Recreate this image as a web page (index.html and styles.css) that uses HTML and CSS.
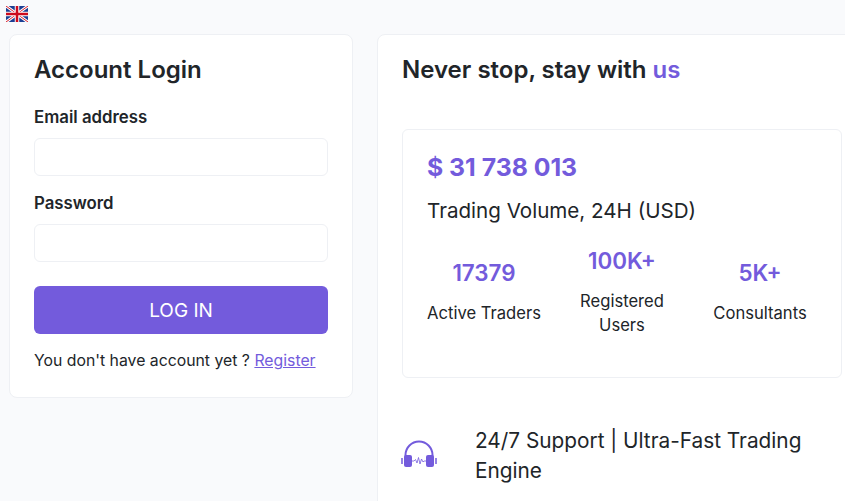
FILE: index.html
```html
<!DOCTYPE html>
<html>

<head>
  <title>Account Login</title>
  <link rel="stylesheet" href="styles.css">
</head>

<body>
  <div class="lang">
    <svg class="flag" viewBox="0 0 22 16" width="22" height="16">
      <rect width="22" height="16" fill="#1c3f94" />
      <path d="M0 0L22 16M22 0L0 16" stroke="#fff" stroke-width="3" />
      <path d="M0 0L22 16M22 0L0 16" stroke="#d8202c" stroke-width="1" />
      <path d="M11 0V16M0 8H22" stroke="#fff" stroke-width="4.500" />
      <path d="M11 0V16M0 8H22" stroke="#cc0a1e" stroke-width="2.500" />
    </svg>
  </div>
  <div class="page">
    <div class="card login">
      <h2>Account Login</h2>
      <label for="email">Email address</label>
      <input type="text" id="email">
      <label for="password">Password</label>
      <input type="password" id="password">
      <button>LOG IN</button>
      <p class="register">You don't have account yet ? <a href="#">Register</a></p>
    </div>
    <div class="card info">
      <h2>Never stop, stay with <span class="accent">us</span></h2>
      <div class="volume">
        <div class="amount">$ 31 738 013</div>
        <div class="amount-label">Trading Volume, 24H (USD)</div>
        <div class="stats">
          <div class="stat">
            <div class="stat-num">17379</div>
            <div class="stat-label">Active Traders</div>
          </div>
          <div class="stat">
            <div class="stat-num">100K+</div>
            <div class="stat-label">Registered Users</div>
          </div>
          <div class="stat">
            <div class="stat-num">5K+</div>
            <div class="stat-label">Consultants</div>
          </div>
        </div>
      </div>
      <div class="feature">
        <svg class="headset" viewBox="0 0 36 28" width="36" height="28">
          <path d="M4.500 17V15a13.500 13.500 0 0 1 27 0V17" fill="none" stroke="#735bdc" stroke-width="2" />
          <rect x="3" y="15" width="8" height="12" rx="2" fill="#735bdc" />
          <rect x="25" y="15" width="8" height="12" rx="2" fill="#735bdc" />
          <path d="M1 18V24M35 18V24" stroke="#735bdc" stroke-width="1.500" />
          <path d="M11 21H13L14.500 19.500L16 23L17.500 17.500L19 24L20.500 19L22 22L23 21H25" fill="none" stroke="#735bdc" stroke-width="0.800" />
        </svg>
        <div class="feature-text">24/7 Support | Ultra-Fast Trading Engine</div>
      </div>
    </div>
  </div>
</body>

</html>
```

FILE: styles.css
```css
html,
body {
  height: 100%;
  overflow: hidden;
}

body {
  margin: 0;
  background-color: #f9fafc;
  color: #212529;
  font-family: Inter, "Noto Sans", sans-serif;
  font-size: 16px;
}

.lang {
  height: 34px;
  padding: 6px 0 0 6px;
  box-sizing: border-box;
}

.flag {
  display: block;
}

.page {
  display: flex;
  gap: 24px;
  align-items: flex-start;
  margin-left: 9px;
  width: 860px;
}

.card {
  background-color: #fff;
  border: 1px solid #eef0f4;
  border-radius: 8px;
  box-sizing: border-box;
}

.login {
  flex: 0 0 344px;
  height: 364px;
  padding: 20px 24px 0;
}

.info {
  flex: 0 0 490px;
  height: 520px;
  padding: 20px 24px 0;
}

h2 {
  margin: 0;
  font-size: 24px;
  line-height: 30px;
  font-weight: 600;
}

.accent {
  color: #735bdc;
}

label {
  display: block;
  margin-top: 15px;
  font-size: 16.800px;
  line-height: 24px;
  font-weight: 600;
}

.login h2 + label {
  margin-top: 20px;
}

input {
  display: block;
  width: 100%;
  height: 38px;
  margin-top: 9px;
  box-sizing: border-box;
  background-color: #fff;
  border: 1px solid #eef0f4;
  border-radius: 6px;
}

button {
  display: block;
  width: 100%;
  height: 48px;
  margin-top: 24px;
  background-color: #735bdc;
  border: 0;
  border-radius: 6px;
  color: #fff;
  font-family: inherit;
  font-size: 19px;
}

.register {
  margin: 16px 0 0;
  font-size: 15.800px;
  line-height: 22px;
}

.register a {
  color: #735bdc;
}

.volume {
  height: 249px;
  margin-top: 44px;
  padding: 20px 24px 0;
  box-sizing: border-box;
  background-color: #fff;
  border: 1px solid #eef0f4;
  border-radius: 6px;
}

.amount {
  color: #735bdc;
  font-size: 24.800px;
  line-height: 34px;
  font-weight: 700;
}

.amount-label {
  margin-top: 12px;
  font-size: 20.600px;
  line-height: 30px;
}

.stats {
  display: flex;
  align-items: center;
  gap: 24px;
  margin-top: 20px;
}

.stat {
  flex: 1;
  text-align: center;
}

.stat-num {
  color: #735bdc;
  font-size: 22.400px;
  line-height: 30px;
  font-weight: 600;
}

.stat-label {
  margin-top: 13px;
  font-size: 16.600px;
  line-height: 24px;
}

.feature {
  display: flex;
  align-items: center;
  gap: 38px;
  margin-top: 48px;
}

.headset {
  flex: none;
  margin: 0 0 4px -1px;
}

.feature-text {
  font-size: 20.800px;
  line-height: 30px;
}
```
